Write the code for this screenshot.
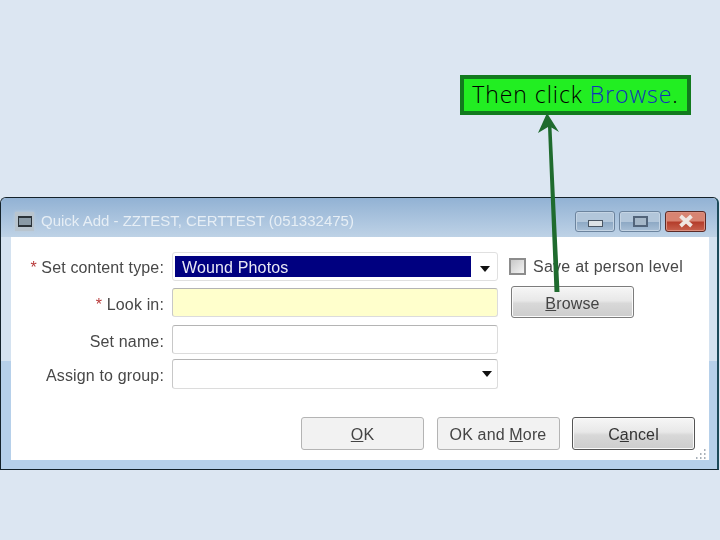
<script>
  const rows = [
    { label: 'Set content type:', req: true },
    { label: 'Look in:', req: true },
    { label: 'Set name:', req: false },
    { label: 'Assign to group:', req: false }
  ];
</script>

<div class="page">
  <div class="callout">Then click <span class="link">Browse</span>.</div>

  <div class="win">
    <div class="titlebar">
      <div class="appicon"><span></span></div>
      <div class="title">Quick Add - ZZTEST, CERTTEST (051332475)</div>
      <div class="capbtns">
        <div class="cap min"><span></span></div>
        <div class="cap max"><span></span></div>
        <div class="cap close">
          <svg width="20" height="14" viewBox="0 0 20 14"><path d="M4.5 2 L15.5 12 M15.5 2 L4.5 12" stroke="#efe6e2" stroke-width="3.8" fill="none"/></svg>
        </div>
      </div>
    </div>
    <div class="client">
      <div class="form">
        <div class="lab r0"><i>*</i> {rows[0].label}</div>
        <div class="field f0">
          <div class="sel">Wound Photos</div>
          <div class="caret c0"></div>
        </div>
        <div class="opt">
          <div class="check"></div>
          <span>Save at person level</span>
        </div>

        <div class="lab r1"><i>*</i> {rows[1].label}</div>
        <div class="field f1"></div>
        <div class="btn browse raised"><span><u>B</u>rowse</span></div>

        <div class="lab r2">{rows[2].label}</div>
        <div class="field f2"></div>
        <div></div>

        <div class="lab r3">{rows[3].label}</div>
        <div class="field f3"><div class="caret"></div></div>
        <div></div>
      </div>
      <div class="actions">
        <div class="btn flat"><span><u>O</u>K</span></div>
        <div class="btn flat"><span>OK and <u>M</u>ore</span></div>
        <div class="btn raised dark"><span>C<u>a</u>ncel</span></div>
      </div>
      <div class="grip">
        <svg width="10" height="11" viewBox="0 0 10 11" fill="#a8b0b8">
          <rect x="8" y="0" width="1.5" height="2"/><rect x="8" y="4" width="1.5" height="2"/><rect x="8" y="8" width="1.5" height="2"/>
          <rect x="4" y="4" width="1.5" height="2"/><rect x="4" y="8" width="1.5" height="2"/><rect x="0" y="8" width="1.5" height="2"/>
        </svg>
      </div>
    </div>
  </div>

  <svg class="arrow" width="720" height="540" viewBox="0 0 720 540">
    <path d="M547 113 L559 132 L551.5 127.5 L559.5 292 L554.5 292 L548 127 L538 133 Z" fill="#1f6b2e"/>
  </svg>
</div>

<style>
  :global(body) { margin: 0; background: #dce6f2; }
  .page {
    position: relative;
    width: 720px;
    height: 540px;
    overflow: hidden;
    padding-top: 75px;
    box-sizing: border-box;
    display: flex;
    flex-direction: column;
  }
  .callout {
    margin-left: 460px;
    width: 231px;
    height: 40px;
    box-sizing: border-box;
    border: 4px solid #127a1e;
    background: #22ee22;
    color: #000;
    font: 300 23px/30px "Open Sans", sans-serif;
    text-align: center;
    white-space: nowrap;
    letter-spacing: 0.95px;
  }
  .link { color: #1133bb; }
  .win {
    margin-top: 82px;
    width: 719px;
    height: 273px;
    box-sizing: border-box;
    border: 1px solid #14222a;
    border-right: 2px solid #1c4a5a;
    border-radius: 6px 6px 0 0;
    background: linear-gradient(#d4e2f0 0 163px, #b6d0ea 163px);
    padding: 0 8px 9px 10px;
    display: flex;
    flex-direction: column;
  }
  .titlebar {
    height: 39px;
    box-sizing: border-box;
    margin: 0 -8px 0 -10px;
    padding: 7px 11px 0 14px;
    display: flex;
    align-items: center;
    gap: 7px;
    background: linear-gradient(#92b2d4, #bed2e6);
    border-radius: 5px 5px 0 0;
    flex: none;
  }
  .appicon {
    width: 19px;
    height: 19px;
    background: #b8c4ce;
    box-shadow: 0 0 3px #c0ccd8;
    display: flex;
    align-items: center;
    justify-content: center;
    flex: none;
  }
  .appicon span {
    width: 14px;
    height: 11px;
    box-sizing: border-box;
    background: #8a9aa6;
    border: solid #2a3238;
    border-width: 2px 1px;
  }
  .title {
    flex: 1;
    font: 15px "Liberation Sans", sans-serif;
    color: #e6eef5;
    white-space: nowrap;
    filter: blur(0.4px);
    margin-top: -2px;
  }
  .capbtns { display: flex; gap: 4px; }
  .cap {
    width: 40px;
    height: 21px;
    box-sizing: border-box;
    border: 1px solid #6c849e;
    border-radius: 3px;
    box-shadow: inset 0 0 0 1px #c4d4e4;
    background: linear-gradient(#b2c6da 0 50%, #8ea9c5 55%, #a8bfd6);
    display: flex;
    align-items: center;
    justify-content: center;
  }
  .cap.min span {
    width: 15px; height: 7px; margin-top: 5px;
    background: #dde2e6; border: 1px solid #4a5664; box-sizing: border-box;
  }
  .cap.max { width: 42px; }
  .cap.max span {
    width: 15px; height: 11px;
    background: #a5b7c8; border: 2px solid #52647a; box-sizing: border-box;
  }
  .cap.close {
    width: 41px;
    border-color: #5c2a26;
    box-shadow: inset 0 0 0 1px #dc9080;
    background: linear-gradient(#d88472 0 45%, #b53e2c 55%, #c8624e);
  }
  .client {
    flex: 1;
    position: relative;
    background: #fff;
    font: 16px "Liberation Sans", sans-serif;
    letter-spacing: 0.15px;
    color: #484848;
    padding: 15px 0 0 0;
    display: flex;
    flex-direction: column;
  }
  .form {
    display: grid;
    grid-template-columns: 153px 326px auto;
    grid-template-rows: 36px 37px 34px 30px;
    column-gap: 8px;
    align-items: start;
  }
  .lab {
    text-align: right;
    white-space: nowrap;
    filter: blur(0.35px);
  }
  .r0 { line-height: 31px; }
  .r1, .r2 { line-height: 33px; }
  .r3 { line-height: 34px; }
  .lab i { color: #b83a3a; font-style: normal; }
  .field {
    box-sizing: border-box;
    border: 1px solid #dcdcdc;
    border-top-color: #b4b4b4;
    border-left-color: #c8c8c8;
    border-radius: 3px;
    background: #fff;
    display: flex;
    align-items: center;
  }
  .f0 { height: 29px; padding: 3px 2px; border-color: #e0e0e0; }
  .f1 { height: 29px; background: #ffffcc; }
  .f2 { height: 29px; }
  .f3 { height: 30px; }
  .sel {
    width: 296px;
    height: 100%;
    padding-left: 7px;
    box-sizing: border-box;
    background: #000080;
    color: #e8e8f4;
    line-height: 24px;
    filter: blur(0.3px);
  }
  .caret {
    margin-left: auto;
    margin-right: 5px;
    width: 0; height: 0;
    border-left: 5.5px solid transparent;
    border-right: 5.5px solid transparent;
    border-top: 6px solid #111;
  }
  .c0 { margin-top: 4px; }
  .opt {
    margin-left: 3px;
    display: flex;
    align-items: center;
    gap: 7px;
    height: 29px;
    white-space: nowrap;
    letter-spacing: 0.25px;
  }
  .opt span { filter: blur(0.35px); }
  .check {
    width: 17px; height: 17px;
    box-sizing: border-box;
    border: 2px solid #8c8c8c;
    background: linear-gradient(135deg, #c8c8c8, #f4f4f4);
  }
  .btn {
    width: 123px;
    height: 33px;
    box-sizing: border-box;
    border: 1px solid #a0a0a0;
    border-radius: 3px;
    padding-top: 3px;
    display: flex;
    align-items: center;
    justify-content: center;
    color: #444;
    background: #f2f2f2;
  }
  .btn span { filter: blur(0.3px); }
  .raised {
    background: linear-gradient(#f6f6f6, #e8e8e8 45%, #d8d8d8 55%, #cdcdcd);
    border-color: #7c7c7c;
    box-shadow: inset 0 0 0 1px #fafafa;
  }
  .browse { margin: -2px 0 0 5px; height: 32px; padding-top: 4px; }
  .dark { border-color: #555; color: #333; }
  .flat { border-color: #b4b4b4; }
  .actions {
    display: flex;
    gap: 12.5px;
    margin: 28px 0 0 auto;
    padding-right: 14px;
  }
  .grip { position: absolute; right: 3px; bottom: 3px; height: 11px; }
  .arrow { position: absolute; left: 0; top: 0; pointer-events: none; }
</style>
